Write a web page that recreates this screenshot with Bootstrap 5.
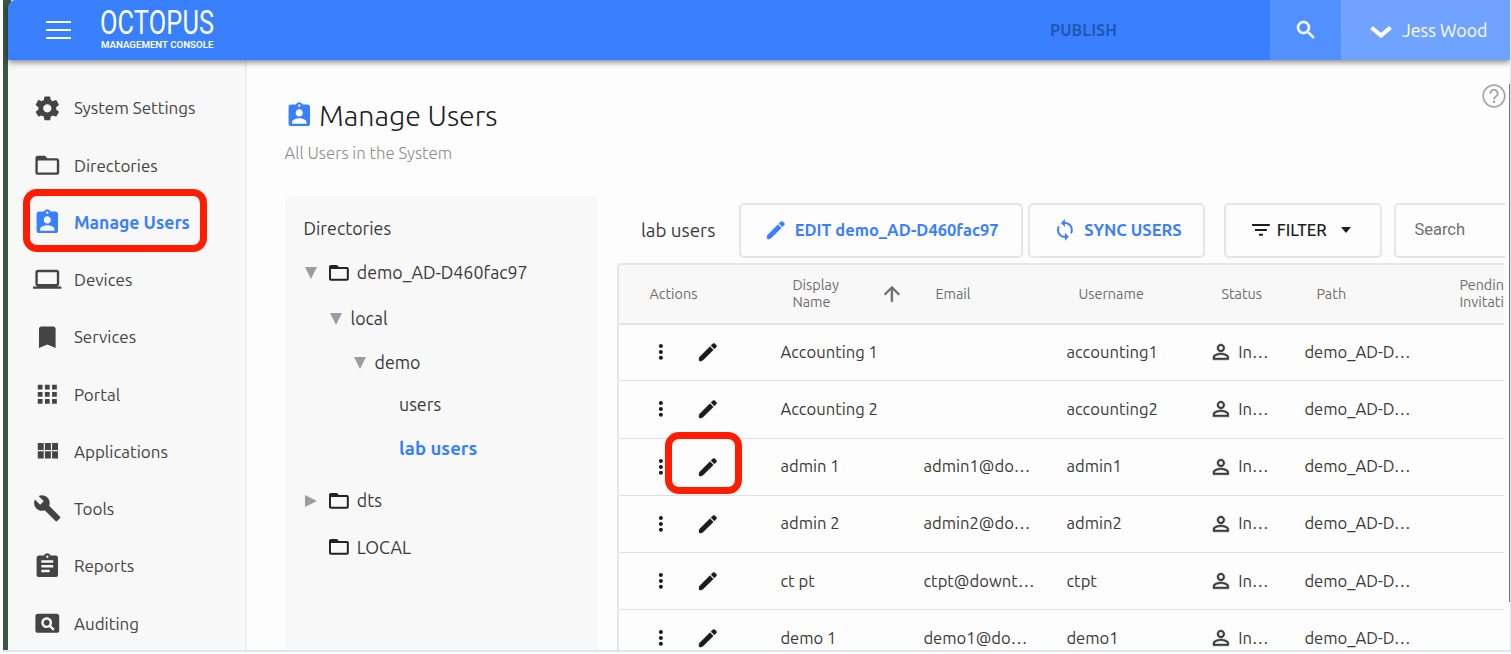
<!DOCTYPE html>
<html lang="en">
<head>
<meta charset="utf-8">
<meta name="viewport" content="width=device-width, initial-scale=1">
<title>Octopus Management Console</title>
<link href="https://cdn.jsdelivr.net/npm/bootstrap@5.3.0/dist/css/bootstrap.min.css" rel="stylesheet">
<style>
:root{--oc-blue:#3880ff;--oc-ink:#3a3a3a;--oc-line:#e6e6e6}
body{font-family:Ubuntu,"Noto Sans",sans-serif;font-size:17.8px;color:var(--oc-ink);background:#fff;height:654px;overflow:hidden}
svg{fill:currentColor;flex:none;display:block}
.app-frame{width:1508px;height:652px;margin-left:3px;border-right:1px solid #dfe3f2;border-bottom:2px solid #dfe3f2;background:#fdfdfd;overflow:hidden}
.edge{width:5px;background:#3c5746;box-shadow:3px 0 0 #3c5746;flex:none}
.topbar{height:60px;background:var(--oc-blue);color:#fff;border-top-left-radius:8px;box-shadow:0 2px 6px rgba(0,0,0,.5);z-index:3}
.burger{width:25px;margin-left:38px;gap:5.5px}
.burger span{height:2.3px;background:#fff}
.brand{margin-left:29px;width:116px;font-family:Roboto,sans-serif;white-space:nowrap}
.brand-name{font-size:34px;line-height:30px;transform:scaleX(.745);transform-origin:0 50%;margin-left:0;margin-top:-3px;letter-spacing:.2px;font-weight:400}
.brand-sub{font-size:9.7px;line-height:11px;font-weight:600;margin-top:1.5px;margin-left:1px}
.publish{color:#2157b4;font-weight:600;font-size:16.2px;margin-right:153px}
.top-search{width:71px;background:#5390ff}
.top-user{width:169px;background:#70a2ff;padding-left:28px;gap:9px}
.side{width:239px;background:#f8f8f8;border-right:2px solid #ededed;padding-top:19.4px;flex:none;z-index:1;font-size:17px}
.side-link{height:57.25px;flex:none;padding-left:25.3px;gap:12px;color:#444;white-space:nowrap}
.side-link svg{width:28.6px;height:28.6px}
.side-link.active{color:var(--oc-blue);font-weight:600;font-size:17.6px;line-height:28px}
.side-link.active span{padding-top:1px}
.ring{position:absolute;border:7.5px solid #ff1c00;border-radius:14px;pointer-events:none}
.ring-nav{left:15px;top:-5px;width:184px;height:63px}
.ring-edit{left:46px;top:-6.5px;width:77px;height:62px;z-index:2}
.main-area{padding:37px 0 0 37.5px;min-width:0}
.page-title{font-size:28.6px;font-weight:300;color:#1d1d1d;line-height:36px;margin:0 0 0 6px}
.page-sub{color:#8c8c8c;font-weight:300;font-size:16.8px;line-height:24px}
.tree{width:313px;background:#f8f8f8;border-radius:6px;padding:18.5px 0 0 19px;flex:none}
.tree-title{line-height:26px;margin-bottom:10px}
.tree-row{height:44px}
.tree-row svg.fold{width:23.8px;height:23.8px;margin:0 6px 0 10px;color:#222}
.tri{width:12px;height:12px;color:#9c9c9c}
.l-1 .tri,.l-2 .tri{margin:4px 9px 0 0}
.l-0{padding-left:1.5px}.l-1{padding-left:26px}.l-2{padding-left:50px}.l-3{padding-left:95.5px}
.tree-on{color:var(--oc-blue);font-weight:600;font-size:18.6px}
.tools{height:55px;margin-top:6.5px;white-space:nowrap}
.lab-title{flex:none;width:98px;margin-left:24px;font-size:18.8px}
.box-btn{border:2px solid var(--oc-line);border-radius:5px;height:55px;background:#fdfdfd;font-weight:600;flex:none;padding:0;color:var(--oc-blue);font-size:16.5px}
.grid-wrap{margin-top:5.5px;width:887px;overflow:hidden;border:2px solid var(--oc-line);border-right:0;border-bottom:0;border-top-left-radius:5px;height:400px}
.user-grid{table-layout:fixed;width:960px;margin:0;font-size:16.6px}
.user-grid>:not(caption)>*>*{padding:0 0 0 12.5px;height:57.25px;vertical-align:middle;border-bottom:1.5px solid #e0e0e0;background:transparent;color:var(--oc-ink);white-space:nowrap;box-shadow:none}
.user-grid>thead>tr>th{height:58.5px;padding-left:24.5px;border-bottom:2px solid #e4e4e4;background:#f8f8f8;color:#6d6d6d;font-weight:400;font-size:14.4px;line-height:16.5px}
.act{padding-left:17.3px;gap:20px;color:#1b1b1b}
.ic-24{width:23.8px;height:23.8px}
.help{position:absolute;right:2px;top:22px;width:28px;height:28px;color:#a5a5a5}
.thumb{position:absolute;right:-1px;top:24px;width:2px;height:518px;background:#77777c}
</style>
</head>
<body>
<svg width="0" height="0" style="position:absolute">
<symbol id="i-gear" viewBox="0 0 24 24"><path d="M19.43 12.98c.04-.32.07-.64.07-.98s-.03-.66-.07-.98l2.11-1.65c.19-.15.24-.42.12-.64l-2-3.46c-.12-.22-.39-.3-.61-.22l-2.49 1c-.52-.4-1.08-.73-1.69-.98l-.38-2.65C14.46 2.18 14.25 2 14 2h-4c-.25 0-.46.18-.49.42l-.38 2.65c-.61.25-1.17.59-1.69.98l-2.49-1c-.23-.09-.49 0-.61.22l-2 3.46c-.13.22-.07.49.12.64l2.11 1.65c-.04.32-.07.65-.07.98s.03.66.07.98l-2.11 1.65c-.19.15-.24.42-.12.64l2 3.46c.12.22.39.3.61.22l2.49-1c.52.4 1.08.73 1.69.98l.38 2.65c.03.24.24.42.49.42h4c.25 0 .46-.18.49-.42l.38-2.65c.61-.25 1.17-.59 1.69-.98l2.49 1c.23.09.49 0 .61-.22l2-3.46c.12-.22.07-.49-.12-.64l-2.11-1.65zM12 15.5c-1.93 0-3.5-1.57-3.5-3.5s1.57-3.5 3.5-3.5 3.5 1.57 3.5 3.5-1.57 3.5-3.5 3.5z"/></symbol>
<symbol id="i-folder" viewBox="0 0 24 24"><path d="M20 6h-8l-2-2H4c-1.1 0-1.99.9-1.99 2L2 18c0 1.1.9 2 2 2h16c1.1 0 2-.9 2-2V8c0-1.1-.9-2-2-2zm0 12H4V8h16v10z"/></symbol>
<symbol id="i-badge" viewBox="0 0 24 24"><path d="M19 3h-4.18C14.4 1.84 13.3 1 12 1c-1.3 0-2.4.84-2.82 2H5c-1.1 0-2 .9-2 2v14c0 1.1.9 2 2 2h14c1.1 0 2-.9 2-2V5c0-1.1-.9-2-2-2zm-7 0c.55 0 1 .45 1 1s-.45 1-1 1-1-.45-1-1 .45-1 1-1zm0 4c1.66 0 3 1.34 3 3s-1.34 3-3 3-3-1.34-3-3 1.34-3 3-3zm6 12H6v-1.4c0-2 4-3.1 6-3.1s6 1.1 6 3.1V19z"/></symbol>
<symbol id="i-laptop" viewBox="0 0 24 24"><path d="M20 18c1.1 0 1.99-.9 1.99-2L22 6c0-1.1-.9-2-2-2H4c-1.1 0-2 .9-2 2v10c0 1.1.9 2 2 2H0v2h24v-2h-4zM4 6h16v10H4V6z"/></symbol>
<symbol id="i-mark" viewBox="0 0 24 24"><path d="M17 3H7c-1.1 0-1.99.9-1.99 2L5 21l7-3 7 3V5c0-1.1-.9-2-2-2z"/></symbol>
<symbol id="i-apps" viewBox="0 0 24 24"><path d="M4 8h4V4H4v4zm6 12h4v-4h-4v4zm-6 0h4v-4H4v4zm0-6h4v-4H4v4zm6 0h4v-4h-4v4zm6-10v4h4V4h-4zm-6 4h4V4h-4v4zm6 6h4v-4h-4v4zm0 6h4v-4h-4v4z"/></symbol>
<symbol id="i-module" viewBox="0 0 24 24"><path d="M4 11h5V5H4v6zm0 7h5v-6H4v6zm6 0h5v-6h-5v6zm6 0h5v-6h-5v6zm-6-7h5V5h-5v6zm6-6v6h5V5h-5z"/></symbol>
<symbol id="i-wrench" viewBox="0 0 24 24"><path d="M22.7 19l-9.1-9.1c.9-2.3.4-5-1.5-6.9-2-2-5-2.4-7.4-1.3L9 6 6 9 1.6 4.7C.4 7.1.9 10.1 2.9 12.1c1.9 1.9 4.6 2.4 6.9 1.5l9.1 9.1c.4.4 1 .4 1.4 0l2.3-2.3c.5-.4.5-1.1.1-1.4z"/></symbol>
<symbol id="i-report" viewBox="0 0 24 24"><path d="M19 3h-4.18C14.4 1.84 13.3 1 12 1c-1.3 0-2.4.84-2.82 2H5c-1.1 0-2 .9-2 2v14c0 1.1.9 2 2 2h14c1.1 0 2-.9 2-2V5c0-1.1-.9-2-2-2zm-7 0c.55 0 1 .45 1 1s-.45 1-1 1-1-.45-1-1 .45-1 1-1zm2 14H7v-2h7v2zm3-4H7v-2h10v2zm0-4H7V7h10v2z"/></symbol>
<symbol id="i-audit" viewBox="0 0 24 24"><path d="M11.5 9C10.12 9 9 10.12 9 11.5s1.12 2.5 2.5 2.5 2.500-1.12 2.500-2.500S12.880 9 11.500 9zM20 4H4c-1.100 0-2 .9-2 2v12c0 1.100.9 2 2 2h16c1.100 0 2-.9 2-2V6c0-1.100-.9-2-2-2zm-3.210 14.210l-2.910-2.910c-.69.440-1.510.700-2.390.700C9.010 16 7 13.990 7 11.500S9.010 7 11.500 7 16 9.010 16 11.500c0 .880-.260 1.690-.700 2.390l2.910 2.900-1.420 1.420z"/></symbol>
<symbol id="i-search" viewBox="0 0 24 24"><path d="M15.5 14h-.79l-.28-.27C15.410 12.590 16 11.110 16 9.500 16 5.910 13.090 3 9.500 3S3 5.910 3 9.500 5.910 16 9.500 16c1.610 0 3.090-.590 4.230-1.570l.270.280v.790l5 4.990L20.490 19l-4.990-5zm-6 0C7.010 14 5 11.990 5 9.500S7.010 5 9.500 5 14 7.010 14 9.500 11.990 14 9.500 14z" stroke="currentColor" stroke-width=".5"/></symbol>
<symbol id="i-pencil" viewBox="0 0 24 24"><path d="M5 21.300Q2.700 21.800 3 19.600L3.300 17.400L14.100 6.600L17.500 10L7 20.500zM18.500 9L15.100 5.600L17 3.700Q18 2.900 19 3.700L20.500 5.200Q21.300 6.200 20.500 7z" stroke="currentColor" stroke-width=".3"/></symbol>
<symbol id="i-dots" viewBox="0 0 24 24"><path d="M12 8c1.100 0 2-.9 2-2s-.9-2-2-2-2 .9-2 2 .9 2 2 2zm0 2c-1.100 0-2 .9-2 2s.9 2 2 2 2-.9 2-2-.9-2-2-2zm0 6c-1.100 0-2 .9-2 2s.9 2 2 2 2-.9 2-2-.9-2-2-2z"/></symbol>
<symbol id="i-sync" viewBox="0 0 24 24"><path d="M12 4V1L8 5l4 4V6c3.310 0 6 2.690 6 6 0 1.010-.250 1.970-.7 2.800l1.460 1.460C19.540 15.030 20 13.570 20 12c0-4.420-3.580-8-8-8zm0 14c-3.310 0-6-2.690-6-6 0-1.010.250-1.970.7-2.800L5.240 7.740C4.460 8.970 4 10.430 4 12c0 4.420 3.580 8 8 8v3l4-4-4-4v3z"/></symbol>
<symbol id="i-filter" viewBox="0 0 24 24"><path d="M10 18h4v-2h-4v2zM3 6v2h18V6H3zm3 7h12v-2H6v2z"/></symbol>
<symbol id="i-person" viewBox="0 0 24 24"><path d="M12 5.900c1.160 0 2.100.940 2.100 2.100s-.940 2.100-2.100 2.100S9.900 9.160 9.900 8s.940-2.100 2.100-2.100m0 9c2.970 0 6.100 1.460 6.100 2.100v1.100H5.900V17c0-.640 3.130-2.100 6.100-2.100M12 4C9.790 4 8 5.790 8 8s1.790 4 4 4 4-1.790 4-4-1.790-4-4-4zm0 9c-2.670 0-8 1.340-8 4v3h16v-3c0-2.660-5.330-4-8-4z" stroke="currentColor" stroke-width=".4"/></symbol>
<symbol id="i-up" viewBox="0 0 24 24"><path d="M4 12l1.410 1.410L11 7.830V20h2V7.830l5.580 5.590L20 12l-8-8-8 8z" stroke="currentColor" stroke-width=".4"/></symbol>
<symbol id="i-help" viewBox="0 0 24 24"><path d="M11 18h2v-2h-2v2zm1-16C6.480 2 2 6.480 2 12s4.480 10 10 10 10-4.480 10-10S17.520 2 12 2zm0 18.500c-4.700 0-8.500-3.800-8.500-8.500s3.800-8.500 8.500-8.500 8.500 3.800 8.500 8.500-3.800 8.500-8.500 8.500zm0-14.500c-2.210 0-4 1.790-4 4h1.600c0-1.300 1.100-2.400 2.400-2.400s2.400 1.100 2.400 2.400c0 2-3.100 1.750-3.100 5h1.600c0-2.250 3.100-2.500 3.100-5 0-2.210-1.790-4-4-4z"/></symbol>
<symbol id="i-down" viewBox="0 0 12 12"><path d="M0 0h12L6 12z"/></symbol>
<symbol id="i-right" viewBox="0 0 12 12"><path d="M0 0v12l12-6z"/></symbol>
</svg>

<div class="app-frame d-flex">
  <div class="edge"></div>
  <div class="d-flex flex-column flex-grow-1 position-relative" style="min-width:0">
    <header class="topbar d-flex align-items-center flex-shrink-0 position-relative">
      <div class="burger d-flex flex-column"><span></span><span></span><span></span></div>
      <div class="brand">
        <div class="brand-name">OCTOPUS</div>
        <div class="brand-sub">MANAGEMENT CONSOLE</div>
      </div>
      <span class="publish ms-auto">PUBLISH</span>
      <div class="top-search h-100 d-flex align-items-center justify-content-center"><svg width="24" height="24"><use href="#i-search"/></svg></div>
      <div class="top-user h-100 d-flex align-items-center text-nowrap">
        <svg width="24" height="14" viewBox="0 0 24 14" class="mt-1"><path d="M2.500 2.500L12 10.500l9.500-8" fill="none" stroke="#fff" stroke-width="4.200"/></svg>
        <span class="user-name">Jess Wood</span>
      </div>
    </header>
    <div class="d-flex flex-grow-1" style="min-height:0">
      <nav class="side d-flex flex-column">
        <a class="side-link d-flex align-items-center text-decoration-none"><svg><use href="#i-gear"/></svg><span>System Settings</span></a>
        <a class="side-link d-flex align-items-center text-decoration-none"><svg><use href="#i-folder"/></svg><span>Directories</span></a>
        <a class="side-link active position-relative d-flex align-items-center text-decoration-none"><svg><use href="#i-badge"/></svg><span>Manage Users</span><i class="ring ring-nav"></i></a>
        <a class="side-link d-flex align-items-center text-decoration-none"><svg><use href="#i-laptop"/></svg><span>Devices</span></a>
        <a class="side-link d-flex align-items-center text-decoration-none"><svg><use href="#i-mark"/></svg><span>Services</span></a>
        <a class="side-link d-flex align-items-center text-decoration-none"><svg><use href="#i-apps"/></svg><span>Portal</span></a>
        <a class="side-link d-flex align-items-center text-decoration-none"><svg><use href="#i-module"/></svg><span>Applications</span></a>
        <a class="side-link d-flex align-items-center text-decoration-none"><svg><use href="#i-wrench"/></svg><span>Tools</span></a>
        <a class="side-link d-flex align-items-center text-decoration-none"><svg><use href="#i-report"/></svg><span>Reports</span></a>
        <a class="side-link d-flex align-items-center text-decoration-none"><svg><use href="#i-audit"/></svg><span>Auditing</span></a>
      </nav>
      <main class="main-area flex-grow-1 position-relative d-flex flex-column">
        <div class="d-flex align-items-center">
          <svg width="28.600" height="28.600" style="color:var(--oc-blue)"><use href="#i-badge"/></svg>
          <h1 class="page-title">Manage Users</h1>
        </div>
        <div class="page-sub mt-2">All Users in the System</div>
        <div class="d-flex flex-grow-1" style="margin-top:31px">
          <section class="tree">
            <div class="tree-title">Directories</div>
            <div class="tree-row l-0 d-flex align-items-center"><svg class="tri"><use href="#i-down"/></svg><svg class="fold"><use href="#i-folder"/></svg>demo_AD-D460fac97</div>
            <div class="tree-row l-1 d-flex align-items-center"><svg class="tri"><use href="#i-down"/></svg><span class="pt-1">local</span></div>
            <div class="tree-row l-2 d-flex align-items-center"><svg class="tri"><use href="#i-down"/></svg><span class="pt-1">demo</span></div>
            <div class="tree-row l-3 d-flex align-items-center">users</div>
            <div class="tree-row l-3 tree-on d-flex align-items-center">lab users</div>
            <div class="tree-row l-0 d-flex align-items-center mt-2"><svg class="tri"><use href="#i-right"/></svg><svg class="fold"><use href="#i-folder"/></svg>dts</div>
            <div class="tree-row l-0 d-flex align-items-center" style="margin-top:2.500px"><svg class="tri invisible"><use href="#i-right"/></svg><svg class="fold"><use href="#i-folder"/></svg>LOCAL</div>
          </section>
          <section style="margin-left:19.400px;width:888px;overflow:hidden">
            <div class="tools d-flex align-items-center">
              <div class="lab-title">lab users</div>
              <button class="box-btn d-flex align-items-center" style="width:284.500px;padding-left:23px;gap:7px"><svg class="ic-24"><use href="#i-pencil"/></svg><span class="t-edit">EDIT demo_AD-D460fac97</span></button>
              <button class="box-btn d-flex align-items-center" style="width:177px;margin-left:5px;padding-left:23px;gap:7px"><svg class="ic-24"><use href="#i-sync"/></svg><span class="t-sync">SYNC USERS</span></button>
              <button class="box-btn d-flex align-items-center" style="width:158px;margin-left:18.500px;padding-left:23px;gap:4px;color:#1d1d1d;font-weight:500"><svg class="ic-24"><use href="#i-filter"/></svg><span class="t-filter">FILTER</span><svg width="10" height="6" viewBox="0 0 10 6" style="margin-left:10px"><path d="M0 0h10L5 6z"/></svg></button>
              <div class="box-btn d-flex align-items-center fw-normal" style="width:180px;margin-left:12px;padding-left:18.500px;color:#707070;font-family:Roboto,sans-serif">Search</div>
            </div>
            <div class="grid-wrap">
              <table class="table user-grid">
                <colgroup><col style="width:149px"><col style="width:143px"><col style="width:143px"><col style="width:143px"><col style="width:95px"><col style="width:143px"><col style="width:144px"></colgroup>
                <thead><tr><th style="padding-left:30.500px">Actions</th><th><div class="d-flex align-items-center">Display<br>Name<svg class="ic-24" style="margin-left:41px"><use href="#i-up"/></svg></div></th><th>Email</th><th>Username</th><th>Status</th><th>Path</th><th>Pending<br>Invitation</th></tr></thead>
                <tbody>
                <tr><td><div class="act d-flex"><svg class="ic-24"><use href="#i-dots"/></svg><svg class="ic-24 ms-1"><use href="#i-pencil"/></svg></div></td><td>Accounting 1</td><td></td><td>accounting1</td><td><div class="d-flex align-items-center"><svg class="ic-24 me-1"><use href="#i-person"/></svg>&#8202;In…</div></td><td>demo_AD-D…</td><td></td></tr>
                <tr><td><div class="act d-flex"><svg class="ic-24"><use href="#i-dots"/></svg><svg class="ic-24 ms-1"><use href="#i-pencil"/></svg></div></td><td>Accounting 2</td><td></td><td>accounting2</td><td><div class="d-flex align-items-center"><svg class="ic-24 me-1"><use href="#i-person"/></svg>&#8202;In…</div></td><td>demo_AD-D…</td><td></td></tr>
                <tr><td class="position-relative"><div class="act d-flex"><svg class="ic-24"><use href="#i-dots"/></svg><svg class="ic-24 ms-1"><use href="#i-pencil"/></svg></div><i class="ring ring-edit"></i></td><td>admin 1</td><td>admin1@do…</td><td>admin1</td><td><div class="d-flex align-items-center"><svg class="ic-24 me-1"><use href="#i-person"/></svg>&#8202;In…</div></td><td>demo_AD-D…</td><td></td></tr>
                <tr><td><div class="act d-flex"><svg class="ic-24"><use href="#i-dots"/></svg><svg class="ic-24 ms-1"><use href="#i-pencil"/></svg></div></td><td>admin 2</td><td>admin2@do…</td><td>admin2</td><td><div class="d-flex align-items-center"><svg class="ic-24 me-1"><use href="#i-person"/></svg>&#8202;In…</div></td><td>demo_AD-D…</td><td></td></tr>
                <tr><td><div class="act d-flex"><svg class="ic-24"><use href="#i-dots"/></svg><svg class="ic-24 ms-1"><use href="#i-pencil"/></svg></div></td><td>ct pt</td><td>ctpt@downt…</td><td>ctpt</td><td><div class="d-flex align-items-center"><svg class="ic-24 me-1"><use href="#i-person"/></svg>&#8202;In…</div></td><td>demo_AD-D…</td><td></td></tr>
                <tr><td><div class="act d-flex"><svg class="ic-24"><use href="#i-dots"/></svg><svg class="ic-24 ms-1"><use href="#i-pencil"/></svg></div></td><td>demo 1</td><td>demo1@do…</td><td>demo1</td><td><div class="d-flex align-items-center"><svg class="ic-24 me-1"><use href="#i-person"/></svg>&#8202;In…</div></td><td>demo_AD-D…</td><td></td></tr>
                </tbody>
              </table>
            </div>
          </section>
        </div>
        <svg class="help" viewBox="0 0 24 24"><use href="#i-help"/></svg>
        <i class="thumb"></i>
      </main>
    </div>
  </div>
</div>
<script src="https://cdn.jsdelivr.net/npm/bootstrap@5.3.0/dist/js/bootstrap.bundle.min.js"></script>
</body>
</html>
